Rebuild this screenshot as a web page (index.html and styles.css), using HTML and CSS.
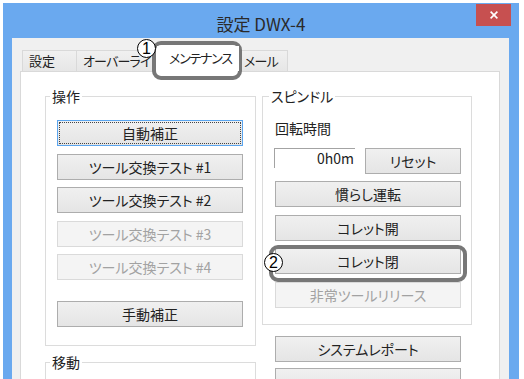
FILE: index.html
```html
<!DOCTYPE html>
<html lang="ja">
<head>
<meta charset="utf-8">
<title>設定 DWX-4</title>
<link rel="stylesheet" href="styles.css">
</head>
<body>
<div class="window">
  <div class="titlebar">
    <div class="title">設定 DWX-4</div>
    <div class="close"><svg width="8" height="8" viewBox="0 0 8 8"><path d="M0.6 0.6 L7.4 7.4 M7.4 0.6 L0.6 7.4" stroke="#fff" stroke-width="1.6" fill="none"/></svg></div>
  </div>
  <div class="client">
    <div class="tabs">
      <div class="tab t1">設定</div>
      <div class="tab t2">オーバーライド</div>
      <div class="tab t3 selected">メンテナンス</div>
      <div class="tab t4">メール</div>
    </div>
    <div class="panel">
      <div class="col col-left">
        <fieldset class="group g-ops">
          <legend>操作</legend>
          <button class="btn default"><span>自動補正</span></button>
          <button class="btn">ツール交換テスト #1</button>
          <button class="btn">ツール交換テスト #2</button>
          <button class="btn" disabled>ツール交換テスト #3</button>
          <button class="btn" disabled>ツール交換テスト #4</button>
          <button class="btn btn-sep">手動補正</button>
        </fieldset>
        <fieldset class="group g-move">
          <legend>移動</legend>
        </fieldset>
      </div>
      <div class="col col-right">
        <fieldset class="group g-spindle">
          <legend>スピンドル</legend>
          <div class="label">回転時間</div>
          <div class="row">
            <div class="textbox">0h0m</div>
            <button class="btn btn-reset">リセット</button>
          </div>
          <button class="btn">慣らし運転</button>
          <button class="btn">コレット開</button>
          <button class="btn">コレット閉</button>
          <button class="btn" disabled>非常ツールリリース</button>
        </fieldset>
        <div class="extra">
          <button class="btn">システムレポート</button>
          <button class="btn">&nbsp;</button>
        </div>
      </div>
    </div>
    <div class="callout-box box1"></div>
    <div class="callout-num num1">1</div>
    <div class="callout-box box2"></div>
    <div class="callout-num num2">2</div>
  </div>
</div>
</body>
</html>
```
FILE: styles.css
```css
* { box-sizing: border-box; }
html, body { margin: 0; padding: 0; overflow: hidden; }
body {
  background: #fff;
  font-family: "Noto Sans CJK JP", "Noto Sans", sans-serif;
  font-size: 14px;
  color: #222;
  font-feature-settings: "palt" 1;
}
.window {
  margin: 3px 0 0 3px;
  width: 516px;
  height: 376px;
  background: #6aa9ef;
  display: flex;
  flex-direction: column;
  overflow: hidden;
}
.titlebar {
  height: 35px;
  flex: none;
  display: grid;
  grid-template-columns: 1fr auto 1fr;
  align-items: start;
}
.title {
  grid-column: 2;
  font-size: 17px;
  line-height: 20px;
  padding-top: 11px;
  color: #2a2a2a;
  font-feature-settings: normal;
}
.close {
  grid-column: 3;
  justify-self: end;
  margin: 1px 8px 0 0;
  width: 35px;
  height: 22px;
  background: #c75050;
  display: flex;
  align-items: center;
  justify-content: center;
}
.close svg { display: block; }
.client {
  flex: 1;
  margin: 0 10px 0 9px;
  background: #f0f0f0;
  position: relative;
  padding: 12px 9px 0 8px;
  display: flex;
  flex-direction: column;
}
.tabs {
  display: flex;
  padding-left: 2px;
  height: 21px;
  flex: none;
}
.tab {
  height: 21px;
  border: 1px solid #d9d9d9;
  border-bottom: none;
  background: linear-gradient(#f0f0f0, #e6e6e6);
  font-size: 13px;
  line-height: 19px;
  white-space: nowrap;
  overflow: hidden;
  color: #222;
}
.t1 { width: 55px; padding-left: 6px; }
.t2 { width: 81px; padding-left: 6px; margin-left: -1px; letter-spacing: -0.8px; }
.t3 {
  width: 82px;
  height: 25px;
  margin-top: -4px;
  padding-left: 12px;
  padding-top: 2px;
  background: #fff;
  border: none;
  position: relative;
  z-index: 3;
  letter-spacing: -1.2px;
}
.t4 { width: 49px; padding-left: 4px; letter-spacing: -0.8px; }
.panel {
  flex: 1;
  background: #fff;
  border: 1px solid #d9d9d9;
  border-bottom: none;
  display: flex;
  gap: 6px;
  padding: 16px 0 0 24px;
}
.col { display: flex; flex-direction: column; }
.col-left { width: 211px; }
.col-right { width: 210px; }
.group {
  margin: 0;
  border: 1px solid #dcdcdc;
  min-width: 0;
  display: flex;
  flex-direction: column;
  align-items: flex-start;
}
.group legend {
  font-size: 14px;
  line-height: 16px;
  padding: 0 2px;
}
.g-ops { padding: 16px 12px 18px 11px; }
.g-ops legend { margin-left: -7px; }
.g-move { margin-top: 8px; padding: 16px 12px 40px 11px; }
.g-move legend { margin-left: -7px; }
.g-spindle { padding: 16px 10px 16px 12px; }
.g-spindle legend { margin-left: -6px; }

.btn {
  width: 186px;
  height: 26px;
  margin: 0 0 7.5px 0;
  padding: 0;
  border: 1px solid #adadad;
  background: linear-gradient(#f0f0f0, #e5e5e5);
  font-family: inherit;
  font-size: 14px;
  font-feature-settings: "palt" 1;
  color: #222;
  line-height: 22px;
  flex: none;
}
.group .btn:last-child { margin-bottom: 0; }
.btn:disabled {
  border-color: #dadada;
  background: #f4f4f4;
  color: #a2a2a2;
}
.btn.default {
  border-color: #5aa5ef;
  position: relative;
}
.btn.default span {
  display: block;
  position: absolute;
  inset: 1px;
  border: 1px dotted #444;
  line-height: 20px;
}
.btn-sep { margin-top: 13.5px; }

.label { line-height: 16px; margin-bottom: 12px; }
.row { display: flex; align-items: flex-start; margin-left: -1px; margin-bottom: 7px; }
.textbox {
  width: 81px;
  height: 20px;
  border-top: 1px solid #a3a3a3;
  border-left: 1px solid #a3a3a3;
  background: #fff;
  text-align: right;
  padding-right: 1px;
  line-height: 18px;
}
.btn-reset { width: 96px; margin: 0 0 0 10px; }
.extra { display: flex; flex-direction: column; padding: 11px 0 0 13px; }
.extra .btn { margin-bottom: 6px; }

.callout-box {
  position: absolute;
  border: 4px solid #777;
  border-radius: 9px;
}
.box1 {
  left: 140px; top: 3px; width: 90px; height: 39px;
  background: #fff;
  z-index: 2;
}
.box2 {
  left: 257px; top: 207px; width: 198px; height: 37px;
  z-index: 2;
}
.callout-num {
  position: absolute;
  z-index: 4;
  width: 19px;
  height: 19px;
  border: 1.2px solid #000;
  border-radius: 50%;
  background: #fff;
  color: #000;
  font-family: "Liberation Sans", sans-serif;
  font-size: 16px;
  line-height: 17px;
  text-align: center;
}
.num1 { left: 125px; top: 1px; }
.num2 { left: 252px; top: 215px; }
```
